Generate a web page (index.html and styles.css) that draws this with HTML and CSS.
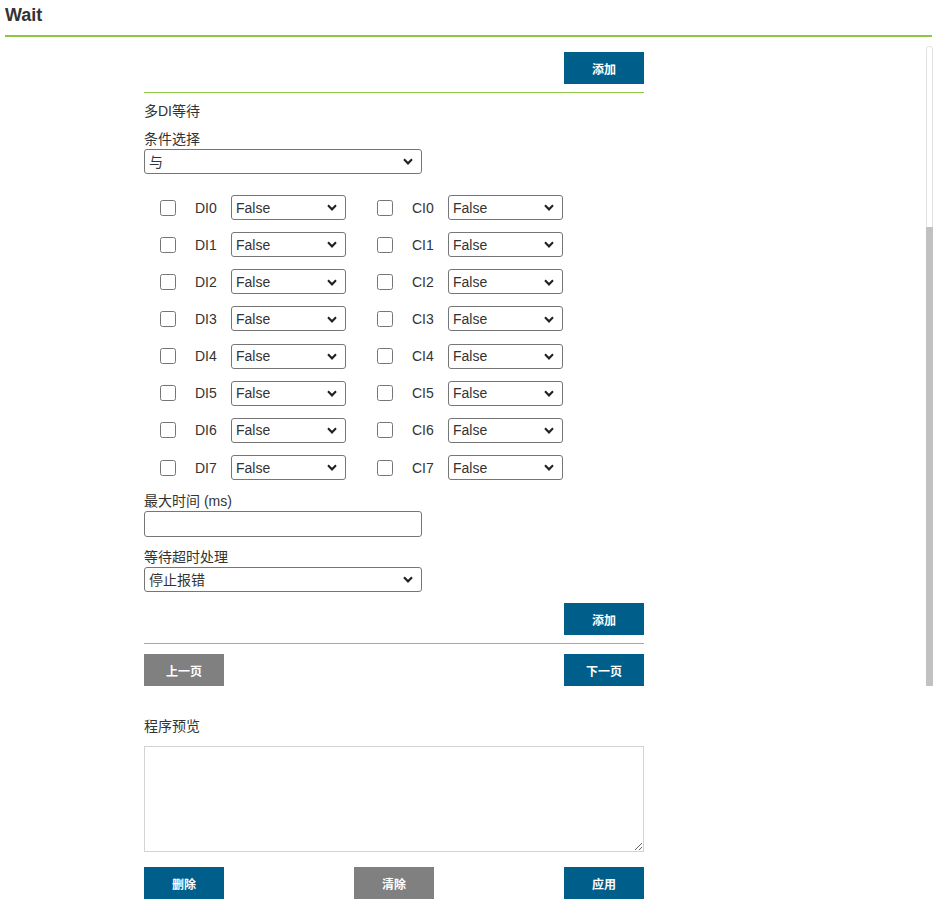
FILE: index.html
```html
<!DOCTYPE html>
<html lang="zh">
<head>
<meta charset="utf-8">
<title>Wait</title>
<link rel="stylesheet" href="styles.css">
</head>
<body>
<div class="page">
  <header class="title-bar"><h1>Wait</h1></header>

  <div class="scroll-area">
    <div class="scroller">
      <div class="scroll-content">
        <section class="form-section first">
          <div class="section-title">单DI等待</div>
          <div class="field-label">DI选择</div>
          <select class="wide-select"><option>DI0</option></select>
          <div class="field-label spaced">状态</div>
          <select class="wide-select"><option>False</option></select>
          <div class="field-label spaced">最大时间 (ms)</div>
          <input class="wide-input" type="text">
          <div class="field-label spaced">等待超时处理</div>
          <select class="wide-select"><option>停止报错</option></select>
          <div class="actions end"><button class="btn primary">添加</button></div>
        </section>

        <hr class="divider">

        <section class="form-section">
          <div class="section-title">多DI等待</div>
          <div class="field-label">条件选择</div>
          <select class="wide-select"><option>与</option><option>或</option></select>

          <div class="io-grid">
            <div class="io-row">
              <label class="io-group"><input type="checkbox"><span class="io-name">DI0</span><select class="io-select"><option>False</option><option>True</option></select></label>
              <label class="io-group"><input type="checkbox"><span class="io-name">CI0</span><select class="io-select"><option>False</option><option>True</option></select></label>
            </div>
            <div class="io-row">
              <label class="io-group"><input type="checkbox"><span class="io-name">DI1</span><select class="io-select"><option>False</option><option>True</option></select></label>
              <label class="io-group"><input type="checkbox"><span class="io-name">CI1</span><select class="io-select"><option>False</option><option>True</option></select></label>
            </div>
            <div class="io-row">
              <label class="io-group"><input type="checkbox"><span class="io-name">DI2</span><select class="io-select"><option>False</option><option>True</option></select></label>
              <label class="io-group"><input type="checkbox"><span class="io-name">CI2</span><select class="io-select"><option>False</option><option>True</option></select></label>
            </div>
            <div class="io-row">
              <label class="io-group"><input type="checkbox"><span class="io-name">DI3</span><select class="io-select"><option>False</option><option>True</option></select></label>
              <label class="io-group"><input type="checkbox"><span class="io-name">CI3</span><select class="io-select"><option>False</option><option>True</option></select></label>
            </div>
            <div class="io-row">
              <label class="io-group"><input type="checkbox"><span class="io-name">DI4</span><select class="io-select"><option>False</option><option>True</option></select></label>
              <label class="io-group"><input type="checkbox"><span class="io-name">CI4</span><select class="io-select"><option>False</option><option>True</option></select></label>
            </div>
            <div class="io-row">
              <label class="io-group"><input type="checkbox"><span class="io-name">DI5</span><select class="io-select"><option>False</option><option>True</option></select></label>
              <label class="io-group"><input type="checkbox"><span class="io-name">CI5</span><select class="io-select"><option>False</option><option>True</option></select></label>
            </div>
            <div class="io-row">
              <label class="io-group"><input type="checkbox"><span class="io-name">DI6</span><select class="io-select"><option>False</option><option>True</option></select></label>
              <label class="io-group"><input type="checkbox"><span class="io-name">CI6</span><select class="io-select"><option>False</option><option>True</option></select></label>
            </div>
            <div class="io-row">
              <label class="io-group"><input type="checkbox"><span class="io-name">DI7</span><select class="io-select"><option>False</option><option>True</option></select></label>
              <label class="io-group"><input type="checkbox"><span class="io-name">CI7</span><select class="io-select"><option>False</option><option>True</option></select></label>
            </div>
          </div>

          <div class="field-label">最大时间 (ms)</div>
          <input class="wide-input" type="text">
          <div class="field-label spaced">等待超时处理</div>
          <select class="wide-select"><option>停止报错</option><option>继续执行</option></select>
          <div class="actions end"><button class="btn primary">添加</button></div>
        </section>

        <hr class="divider">

        <div class="actions between nav"><button class="btn gray">上一页</button><button class="btn primary">下一页</button></div>
      </div>
    </div>
    <div class="scrollbar" aria-hidden="true"><div class="scrollbar-thumb"></div></div>
  </div>

  <section class="preview">
    <div class="field-label">程序预览</div>
    <textarea class="preview-box"></textarea>
    <div class="actions between bottom">
      <button class="btn primary">删除</button>
      <button class="btn gray">清除</button>
      <button class="btn primary">应用</button>
    </div>
  </section>
</div>
</body>
</html>
```

FILE: styles.css
```css
html, body {
  margin: 0;
  padding: 0;
  background: #fff;
}

body {
  font-family: "Liberation Sans", "Noto Sans CJK SC", sans-serif;
  font-size: 14px;
  color: #333;
}

.page {
  width: 928px;
  margin-left: 5px;
}

.title-bar {
  width: 927px;
  padding: 4px 0 9px;
  border-bottom: 2px solid #8dc63f;
}

.title-bar h1 {
  margin: 0;
  font-size: 18px;
  line-height: 22px;
  font-weight: bold;
  color: #333;
}

.scroll-area {
  position: relative;
  margin-top: 9px;
}

.scroller {
  height: 640px;
  overflow-y: auto;
  display: flex;
  flex-direction: column-reverse;
  scrollbar-width: none;
}

.scroller::-webkit-scrollbar {
  width: 0;
  height: 0;
}

.scrollbar {
  position: absolute;
  top: 0;
  right: 0;
  bottom: 0;
  width: 7px;
  box-sizing: border-box;
  border: 1px solid #e2e2e2;
  border-radius: 3px 3px 1px 1px;
  background: #fff;
  display: flex;
  flex-direction: column;
  justify-content: flex-end;
}

.scrollbar-thumb {
  height: 459px;
  margin: 0 -1px -1px;
  background: #c1c1c1;
  border-radius: 1px;
}

.scroll-content {
  flex: none;
  width: 500px;
  margin-left: 139px;
}

.form-section {
  padding-top: 8px;
}

.section-title {
  line-height: 20px;
}

.field-label {
  line-height: 20px;
  margin-top: 8px;
}

.field-label.spaced {
  margin-top: 10px;
}

.io-grid + .field-label {
  margin-top: 0;
}

.wide-select,
.io-select {
  display: block;
  box-sizing: border-box;
  height: 25px;
  margin: 0;
  padding: 0 22px 0 4px;
  font-family: "Liberation Sans", "Noto Sans CJK SC", sans-serif;
  font-size: 14px;
  color: #333;
  background-color: #fff;
  background-image: url("data:image/svg+xml,%3Csvg xmlns='http://www.w3.org/2000/svg' viewBox='0 0 10 6.5'%3E%3Cpath d='M1 1.2l4 3.8 4-3.8' fill='none' stroke='%23222' stroke-width='2.1'/%3E%3C/svg%3E");
  background-repeat: no-repeat;
  background-position: right 8px center;
  background-size: 10px 6.5px;
  border: 1px solid #767676;
  border-radius: 3px;
  -webkit-appearance: none;
  appearance: none;
}

.wide-select {
  width: 278px;
}

.io-select {
  width: 115px;
}

.wide-input {
  display: block;
  box-sizing: border-box;
  width: 278px;
  height: 26px;
  margin: 0;
  padding: 0 4px;
  border: 1px solid #767676;
  border-radius: 3px;
  font-family: "Liberation Sans", sans-serif;
  font-size: 14px;
}

.io-grid {
  display: flex;
  flex-direction: column;
  gap: 12.15px;
  margin-top: 21px;
  margin-bottom: 11px;
}

.io-row {
  display: flex;
  align-items: center;
  height: 25px;
}

.io-group {
  display: flex;
  align-items: center;
  width: 216px;
}

.io-group + .io-group {
  margin-left: 1px;
}

.io-group input[type="checkbox"] {
  width: 16px;
  height: 16px;
  margin: 0 19px 0 16px;
}

.io-name {
  width: 36px;
  line-height: 20px;
}

.actions {
  display: flex;
  margin-top: 11px;
}

.actions.end {
  justify-content: flex-end;
}

.actions.between {
  justify-content: space-between;
}

.actions.nav {
  margin-top: 10px;
}

.actions.bottom {
  margin-top: 15px;
}

.divider {
  border: 0;
  border-top: 1px solid #8dc63f;
  height: 0;
  margin: 8px 0 0;
}

.btn {
  width: 80px;
  height: 32px;
  padding: 0;
  border: 0;
  border-radius: 0;
  color: #fff;
  font-family: "Noto Sans CJK SC", "Liberation Sans", sans-serif;
  font-size: 12px;
  font-weight: bold;
  cursor: pointer;
}

.btn.primary {
  background: #005e8a;
}

.btn.gray {
  background: #808080;
}

.preview {
  width: 500px;
  margin: 30px 0 0 139px;
}

.preview .field-label {
  margin-top: 0;
}

.preview-box {
  display: block;
  box-sizing: border-box;
  width: 500px;
  height: 106px;
  margin-top: 10px;
  border: 1px solid #d3d3d3;
  border-radius: 0;
  font-family: "Liberation Sans", sans-serif;
  font-size: 14px;
}
```
